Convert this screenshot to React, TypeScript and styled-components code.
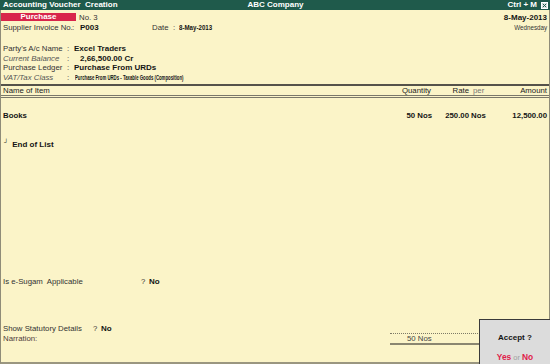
import React from "react";
import styled, { createGlobalStyle } from "styled-components";

const Global = createGlobalStyle`
  html, body { margin: 0; padding: 0; background: #fbf4c8; }
  * { box-sizing: border-box; }
`;

const Screen = styled.div`
  position: relative;
  width: 550px;
  height: 364px;
  background: #fbf4c8;
  display: flex;
  flex-direction: column;
  font-family: "Liberation Sans", Arial, sans-serif;
  font-size: 7.8px;
  color: #303030;
  overflow: hidden;
`;

const TitleBar = styled.div`
  height: 10px;
  flex: none;
  background: #1f5a4b;
  color: #ffffff;
  font-weight: bold;
  font-size: 8px;
  line-height: 10px;
  display: grid;
  grid-template-columns: 1fr auto 1fr;
  align-items: center;
  padding: 0 2px 0 3px;
  white-space: pre;
`;

const TitleRight = styled.div`
  display: flex;
  justify-content: flex-end;
  align-items: center;
  gap: 4px;
`;

const Frame = styled.div`
  flex: 1;
  display: flex;
  flex-direction: column;
  border-left: 1px solid #8f8c78;
  border-right: 1px solid #8f8c78;
  border-bottom: 2px solid #9a9680;
  padding-top: 2px;
  min-height: 0;
`;

const HeaderArea = styled.div`
  flex: none;
  padding: 0 2px 0 0;
  margin-bottom: 2px;
`;

const Row = styled.div<{ $h?: number; $pl?: number; $mt?: number }>`
  display: flex;
  align-items: center;
  height: ${(p) => p.$h ?? 10}px;
  padding-left: ${(p) => p.$pl ?? 2}px;
  margin-top: ${(p) => p.$mt ?? 0}px;
  white-space: pre;
`;

const Badge = styled.div`
  width: 75px;
  height: 8px;
  background: #d8254b;
  color: #fff;
  font-weight: bold;
  font-size: 8px;
  line-height: 8px;
  text-align: center;
`;

const Cell = styled.span<{ $w?: number; $pl?: number; $align?: string }>`
  display: inline-block;
  flex: none;
  width: ${(p) => (p.$w ? `${p.$w}px` : "auto")};
  padding-left: ${(p) => p.$pl ?? 0}px;
  text-align: ${(p) => p.$align ?? "left"};
`;

const Label = styled(Cell)<{ $italic?: boolean }>`
  color: ${(p) => (p.$italic ? "#555" : "#333")};
  font-style: ${(p) => (p.$italic ? "italic" : "normal")};
`;

const Value = styled(Cell)`
  font-weight: bold;
  font-size: 8px;
  color: #141414;
`;

const Squeezed = styled.span<{ $scale: number; $origin?: string; $bold?: boolean; $size?: number }>`
  display: inline-block;
  font-weight: ${(p) => (p.$bold ? "bold" : "normal")};
  font-size: ${(p) => p.$size ?? 8}px;
  color: ${(p) => (p.$bold ? "#141414" : "#333")};
  transform: scaleX(${(p) => p.$scale});
  transform-origin: ${(p) => p.$origin ?? "left"} center;
`;

const RightSide = styled.div`
  margin-left: auto;
  display: flex;
  justify-content: flex-end;
`;

const TableHead = styled.div`
  flex: none;
  display: grid;
  grid-template-columns: 1fr 60px 38px 22px 56px;
  align-items: center;
  height: 14px;
  border-top: 2px solid #55524a;
  border-bottom: 3px double #7a776a;
  padding: 0 2px;
  color: #222;
`;

const ItemGrid = styled.div<{ $mt?: number }>`
  display: grid;
  grid-template-columns: 1fr 61px 37px 22px 56px;
  align-items: center;
  height: 10px;
  margin-top: ${(p) => p.$mt ?? 0}px;
  padding: 0 2px;
  font-weight: bold;
  font-size: 7.8px;
  color: #141414;
`;

const Col = styled.span<{ $align?: string; $pl?: number; $muted?: boolean }>`
  text-align: ${(p) => p.$align ?? "left"};
  padding-left: ${(p) => p.$pl ?? 0}px;
  color: ${(p) => (p.$muted ? "#777" : "inherit")};
  font-weight: ${(p) => (p.$muted ? "normal" : "inherit")};
  white-space: pre;
`;

const ItemsArea = styled.div`
  flex: 1;
  padding-top: 12px;
  min-height: 0;
`;

const EndMark = styled.span`
  font-size: 6px;
  position: relative;
  top: -2px;
  margin-right: 4px;
  font-weight: bold;
`;

const EndRow = styled.div`
  display: flex;
  align-items: center;
  height: 10px;
  margin-top: 19px;
  padding-left: 3px;
  font-weight: bold;
  font-size: 8px;
  color: #141414;
`;

const Footer = styled.div`
  flex: none;
  padding-bottom: 18px;
`;

const NarrationLabel = styled.span`
  color: #4d3c3c;
`;

const NarrationBox = styled.div`
  margin-left: auto;
  margin-right: 69px;
  width: 90px;
  height: 12px;
  border-top: 1px dotted #7d7a66;
  border-bottom: 2px solid #8a8670;
  padding-left: 17px;
  line-height: 9px;
  color: #444;
`;

const AcceptBox = styled.div`
  position: absolute;
  right: 0;
  bottom: 0;
  width: 71px;
  height: 45px;
  background: #dcdcdc;
  border: 1px solid #3a3a3a;
  border-right: none;
  border-bottom: none;
  display: flex;
  flex-direction: column;
  align-items: center;
  padding-top: 13px;
  font-weight: bold;
  font-size: 8px;
  color: #141414;
`;

const Choices = styled.div`
  margin-top: auto;
  margin-bottom: 2px;
  white-space: pre;
  font-size: 8.4px;
`;

const Choice = styled.span<{ $muted?: boolean }>`
  color: ${(p) => (p.$muted ? "#a0a0a0" : "#e0204a")};
  font-weight: ${(p) => (p.$muted ? "normal" : "bold")};
  font-size: ${(p) => (p.$muted ? "7.5px" : "8.4px")};
`;

const CloseIcon = () => (
  <svg width="7" height="7" viewBox="0 0 7 7">
    <rect x="0.5" y="0.5" width="6" height="6" fill="#dfe7e3" stroke="#ffffff" />
    <path d="M1.8 1.8 L5.2 5.2 M5.2 1.8 L1.8 5.2" stroke="#1f5a4b" strokeWidth="1" />
  </svg>
);

export default function App() {
  return (
    <>
      <Global />
      <Screen>
        <TitleBar>
          <span>{"Accounting Voucher  Creation"}</span>
          <span>ABC Company</span>
          <TitleRight>
            <span>Ctrl + M</span>
            <CloseIcon />
          </TitleRight>
        </TitleBar>
        <Frame>
          <HeaderArea>
            <Row $pl={0}>
              <Badge>Purchase</Badge>
              <Label $pl={3}>No. 3</Label>
              <RightSide>
                <Value>8-May-2013</Value>
              </RightSide>
            </Row>
            <Row>
              <Label $w={66}>Supplier Invoice No.</Label>
              <Label $w={8} $align="center">:</Label>
              <Value $w={75} $pl={3}>P003</Value>
              <Label $w={19}>Date</Label>
              <Label $w={6} $align="center">:</Label>
              <Cell $pl={2}>
                <Squeezed $scale={0.77} $bold>8-May-2013</Squeezed>
              </Cell>
              <RightSide>
                <Squeezed $scale={0.78} $origin="right">Wednesday</Squeezed>
              </RightSide>
            </Row>
            <Row $h={9.5} $mt={12}>
              <Label $w={62}>Party's A/c Name</Label>
              <Label $w={6} $align="center">:</Label>
              <Value $pl={3}>Excel Traders</Value>
            </Row>
            <Row $h={9.5}>
              <Label $w={62} $italic>Current Balance</Label>
              <Label $w={6} $align="center">:</Label>
              <Value $pl={9}>2,66,500.00 Cr</Value>
            </Row>
            <Row $h={9.5}>
              <Label $w={62}>Purchase Ledger</Label>
              <Label $w={6} $align="center">:</Label>
              <Value $pl={3}>Purchase From URDs</Value>
            </Row>
            <Row $h={9.5}>
              <Label $w={62} $italic>VAT/Tax Class</Label>
              <Label $w={6} $align="center">:</Label>
              <Cell $pl={4}>
                <Squeezed $scale={0.58} $bold $size={7.4}>
                  Purchase From URDs - Taxable Goods (Composition)
                </Squeezed>
              </Cell>
            </Row>
          </HeaderArea>

          <TableHead>
            <Col>Name of Item</Col>
            <Col $align="right">Quantity</Col>
            <Col $align="right">Rate</Col>
            <Col $pl={4} $muted>per</Col>
            <Col $align="right">Amount</Col>
          </TableHead>

          <ItemsArea>
            <ItemGrid>
              <Col>Books</Col>
              <Col $align="right">50 Nos</Col>
              <Col $align="right">250.00</Col>
              <Col $pl={2}>Nos</Col>
              <Col $align="right">12,500.00</Col>
            </ItemGrid>
            <EndRow>
              <EndMark>┘</EndMark>
              End of List
            </EndRow>
          </ItemsArea>

          <Footer>
            <Row>
              <Label $w={138}>{"Is e-Sugam  Applicable"}</Label>
              <Label $w={8}>?</Label>
              <Value>No</Value>
            </Row>
            <Row $mt={37}>
              <Label $w={90}>Show Statutory Details</Label>
              <Label $w={8}>?</Label>
              <Value>No</Value>
            </Row>
            <Row $h={11}>
              <NarrationLabel>Narration:</NarrationLabel>
              <NarrationBox>50 Nos</NarrationBox>
            </Row>
          </Footer>
        </Frame>

        <AcceptBox>
          <span>Accept ?</span>
          <Choices>
            <Choice>Yes</Choice>
            <Choice $muted>{" or "}</Choice>
            <Choice>No</Choice>
          </Choices>
        </AcceptBox>
      </Screen>
    </>
  );
}
